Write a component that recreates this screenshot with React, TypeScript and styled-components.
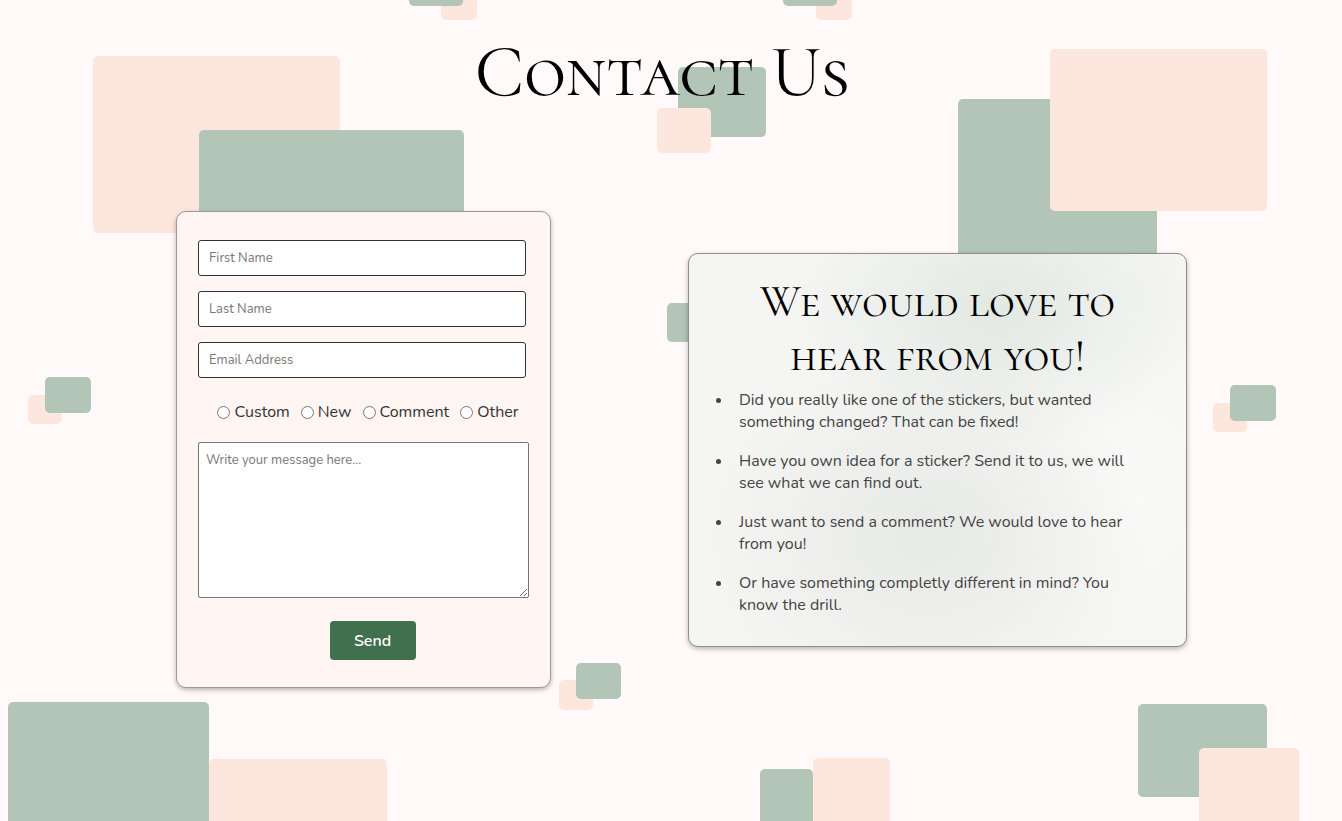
import React from "react";
import styled, { createGlobalStyle } from "styled-components";

const GlobalStyle = createGlobalStyle`
  html, body {
    margin: 0;
    padding: 0;
    height: 100%;
    overflow: hidden;
    background: #fffaf9;
  }
  * { box-sizing: border-box; }
`;

const GREEN = "#b3c5b7";
const PEACH = "#fde6dd";

const Page = styled.div`
  position: relative;
  width: 100%;
  height: 100vh;
  overflow: hidden;
  background: #fffaf9;
  font-family: "Nunito", "Lato", "Noto Sans", sans-serif;
`;

const Shape = styled.div<{ $x: number; $y: number; $w: number; $h: number; $tone: "green" | "peach" }>`
  position: absolute;
  left: ${(p) => p.$x}px;
  top: ${(p) => p.$y}px;
  width: ${(p) => p.$w}px;
  height: ${(p) => p.$h}px;
  border-radius: 5px;
  background: ${(p) => (p.$tone === "green" ? GREEN : PEACH)};
`;

const Content = styled.main`
  position: relative;
  z-index: 1;
  display: flex;
  flex-direction: column;
`;

const Title = styled.h1`
  margin: 36px 0 0;
  font-family: "Cormorant Garamond", "Liberation Serif", serif;
  font-variant: small-caps;
  font-weight: 400;
  font-size: 72px;
  line-height: 72px;
  text-align: center;
  color: #000;
  padding-right: 18px;
`;

const Row = styled.div`
  display: flex;
  align-items: center;
  gap: 137px;
  padding-left: 176px;
  margin-top: 103px;
`;

const FormCard = styled.form`
  width: 375px;
  display: flex;
  flex-direction: column;
  align-items: flex-start;
  padding: 28px 0 27px 21px;
  background: #fff5f2;
  border: 1px solid #9a9a9a;
  border-radius: 10px;
  box-shadow: 0 2px 5px rgba(0, 0, 0, 0.28);
`;

const Field = styled.input<{ $gap?: number }>`
  width: 328px;
  height: 36px;
  margin-top: ${(p) => p.$gap ?? 0}px;
  padding: 0 10px;
  border: 1px solid #333;
  border-radius: 3px;
  background: #fff;
  font-family: inherit;
  font-size: 13px;
  color: #333;
  &::placeholder { color: #777; }
`;

const RadioRow = styled.div`
  margin-top: 24px;
  align-self: center;
  display: flex;
  align-items: center;
  gap: 11px;
  height: 20px;
  font-size: 16px;
  color: #333;
  margin-right: 12px;
`;

const RadioLabel = styled.label`
  display: flex;
  align-items: center;
  gap: 4px;
  input {
    margin: 0;
    width: 13px;
    height: 13px;
  }
`;

const Message = styled.textarea`
  margin-top: 20px;
  width: 331px;
  height: 156px;
  padding: 8px 7px;
  border: 1px solid #767676;
  border-radius: 2px;
  background: #fff;
  font-family: inherit;
  font-size: 13px;
  &::placeholder { color: #777; }
`;

const SendButton = styled.button`
  margin-top: 23px;
  align-self: center;
  margin-right: 3px;
  width: 86px;
  height: 39px;
  border: none;
  border-radius: 4px;
  background: #41704f;
  color: #fff;
  font-family: inherit;
  font-size: 16px;
  font-weight: 600;
`;

const InfoCard = styled.section`
  width: 499px;
  padding: 21px 11px 30px;
  border: 1px solid #8e8e8e;
  border-radius: 10px;
  box-shadow: 0 2px 5px rgba(0, 0, 0, 0.28);
  background:
    radial-gradient(ellipse 200px 140px at 62% 14%, rgba(214, 224, 216, 0.6), transparent),
    radial-gradient(ellipse 220px 180px at 48% 72%, rgba(226, 229, 225, 0.7), transparent),
    radial-gradient(ellipse 160px 200px at 90% 60%, rgba(250, 250, 248, 0.9), transparent),
    #f5f5f3;
`;

const InfoTitle = styled.h2`
  margin: 0;
  padding: 0 40px;
  font-family: "Cormorant Garamond", "Liberation Serif", serif;
  font-variant: small-caps;
  font-weight: 400;
  font-size: 44px;
  line-height: 54px;
  text-align: center;
  color: #000;
`;

const List = styled.ul`
  margin: 6px 0 0;
  padding: 0 40px 0 33px;
  font-size: 16px;
  line-height: 22px;
  color: #444;
`;

const Item = styled.li`
  padding-left: 6px;
  & + & { margin-top: 17px; }
`;

const shapes: { x: number; y: number; w: number; h: number; t: "green" | "peach" }[] = [
  { x: 93, y: 56, w: 247, h: 177, t: "peach" },
  { x: 199, y: 130, w: 265, h: 120, t: "green" },
  { x: 441, y: -16, w: 36, h: 36, t: "peach" },
  { x: 409, y: -30, w: 54, h: 36, t: "green" },
  { x: 816, y: -16, w: 36, h: 36, t: "peach" },
  { x: 783, y: -30, w: 54, h: 36, t: "green" },
  { x: 678, y: 67, w: 88, h: 70, t: "green" },
  { x: 657, y: 108, w: 54, h: 45, t: "peach" },
  { x: 958, y: 99, w: 199, h: 200, t: "green" },
  { x: 1050, y: 49, w: 217, h: 162, t: "peach" },
  { x: 667, y: 303, w: 40, h: 39, t: "green" },
  { x: 28, y: 395, w: 34, h: 29, t: "peach" },
  { x: 45, y: 377, w: 46, h: 36, t: "green" },
  { x: 1213, y: 403, w: 34, h: 29, t: "peach" },
  { x: 1230, y: 385, w: 46, h: 36, t: "green" },
  { x: 559, y: 680, w: 34, h: 30, t: "peach" },
  { x: 576, y: 663, w: 45, h: 36, t: "green" },
  { x: 209, y: 759, w: 178, h: 80, t: "peach" },
  { x: 8, y: 702, w: 201, h: 140, t: "green" },
  { x: 760, y: 769, w: 53, h: 70, t: "green" },
  { x: 813, y: 758, w: 77, h: 80, t: "peach" },
  { x: 1138, y: 704, w: 129, h: 93, t: "green" },
  { x: 1199, y: 748, w: 100, h: 90, t: "peach" },
];

const options = ["Custom", "New", "Comment", "Other"];

const bullets = [
  "Did you really like one of the stickers, but wanted something changed? That can be fixed!",
  "Have you own idea for a sticker? Send it to us, we will see what we can find out.",
  "Just want to send a comment? We would love to hear from you!",
  "Or have something completly different in mind? You know the drill.",
];

export default function App() {
  return (
    <Page>
      <GlobalStyle />
      {shapes.map((s, i) => (
        <Shape key={i} $x={s.x} $y={s.y} $w={s.w} $h={s.h} $tone={s.t} />
      ))}
      <Content>
        <Title>Contact Us</Title>
        <Row>
          <FormCard onSubmit={(e) => e.preventDefault()}>
            <Field type="text" placeholder="First Name" />
            <Field type="text" placeholder="Last Name" $gap={15} />
            <Field type="email" placeholder="Email Address" $gap={15} />
            <RadioRow>
              {options.map((o) => (
                <RadioLabel key={o}>
                  <input type="radio" name="kind" value={o} />
                  {o}
                </RadioLabel>
              ))}
            </RadioRow>
            <Message placeholder="Write your message here..." />
            <SendButton type="submit">Send</SendButton>
          </FormCard>
          <InfoCard>
            <InfoTitle>We would love to hear from you!</InfoTitle>
            <List>
              {bullets.map((b) => (
                <Item key={b}>{b}</Item>
              ))}
            </List>
          </InfoCard>
        </Row>
      </Content>
    </Page>
  );
}
